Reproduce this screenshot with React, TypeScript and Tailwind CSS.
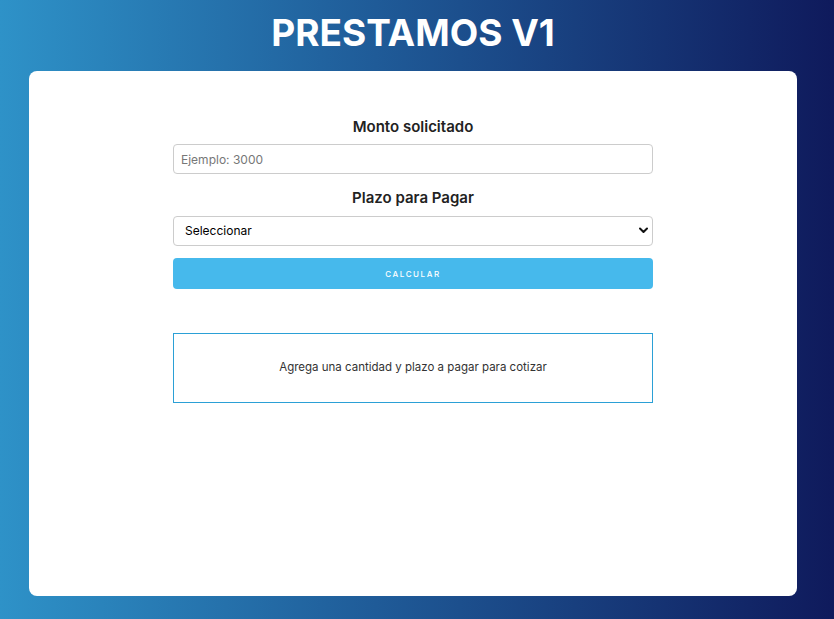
import React from "react";

export default function App() {
  return (
    <div
      className="w-[834px] h-[619px] overflow-hidden bg-[linear-gradient(to_right,#2e92c8,#1f5b98_45%,#0f1a5c)] flex flex-col"
      style={{ fontFamily: "Inter, 'Noto Sans', sans-serif" }}
    >
      <h1 className="ml-[29px] w-[768px] text-center text-white font-bold text-[37px] leading-[45px] mt-[10px] h-[61px]">
        PRESTAMOS V1
      </h1>
      <div className="ml-[29px] w-[768px] h-[525px] bg-white rounded-[8px] flex flex-col items-center pt-[46px]">
        <div className="w-[480px] flex flex-col">
          <label className="text-center text-[15px] font-semibold text-[#222] leading-[20px]">
            Monto solicitado
          </label>
          <input
            type="text"
            placeholder="Ejemplo: 3000"
            className="mt-[7px] h-[30px] w-full border border-[#cccccc] rounded-[4px] px-[7px] text-[12px] text-[#333] placeholder:text-[#777] outline-none"
          />
          <label className="mt-[14px] text-center text-[15px] font-semibold text-[#222] leading-[20px]">
            Plazo para Pagar
          </label>
          <div className="mt-[8px] relative h-[30px] w-full border border-[#cccccc] rounded-[4px] flex items-center px-[11px] text-[12px] text-black">
            <span>Seleccionar</span>
            <svg
              className="absolute right-[4px] top-[10px]"
              width="9"
              height="7"
              viewBox="0 0 9 7"
              fill="none"
            >
              <path d="M1 1.5 L4.5 5 L8 1.5" stroke="#111" strokeWidth="2" strokeLinecap="round" strokeLinejoin="round" />
            </svg>
          </div>
          <button className="mt-[12px] h-[31px] w-full bg-[#46b9ec] rounded-[4px] text-white text-[8px] font-medium tracking-[1.6px]">
            CALCULAR
          </button>
          <div className="mt-[44px] h-[70px] w-full border border-[#2ba0d6] flex items-center justify-center text-[11.5px] text-[#333]">
            Agrega una cantidad y plazo a pagar para cotizar
          </div>
        </div>
      </div>
    </div>
  );
}
